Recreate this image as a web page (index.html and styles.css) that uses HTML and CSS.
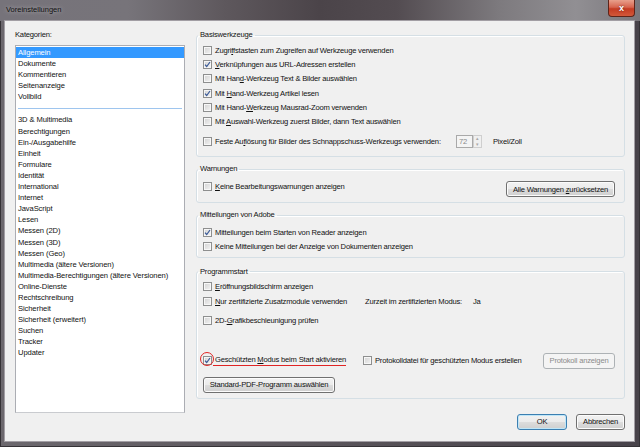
FILE: index.html
```html
<!DOCTYPE html>
<html lang="de">
<head>
    <meta charset="UTF-8">
    <title>Voreinstellungen</title>
    <link rel="stylesheet" href="styles.css">
</head>
<body>
    <div class="window">
        <div class="titlebar">
            <span class="title">Voreinstellungen</span>
            <span class="close">x</span>
        </div>

        <div class="client">
            <!-- Kategorien links -->
            <div class="side">
                <div class="side-label">Kategorien:</div>
                <ul class="cat-list">
                    <li class="selected">Allgemein</li>
                    <li>Dokumente</li>
                    <li>Kommentieren</li>
                    <li>Seitenanzeige</li>
                    <li>Vollbild</li>
                    <li class="sep"></li>
                    <li>3D &amp; Multimedia</li>
                    <li>Berechtigungen</li>
                    <li>Ein-/Ausgabehilfe</li>
                    <li>Einheit</li>
                    <li>Formulare</li>
                    <li>Identität</li>
                    <li>International</li>
                    <li>Internet</li>
                    <li>JavaScript</li>
                    <li>Lesen</li>
                    <li>Messen (2D)</li>
                    <li>Messen (3D)</li>
                    <li>Messen (Geo)</li>
                    <li>Multimedia (ältere Versionen)</li>
                    <li>Multimedia-Berechtigungen (ältere Versionen)</li>
                    <li>Online-Dienste</li>
                    <li>Rechtschreibung</li>
                    <li>Sicherheit</li>
                    <li>Sicherheit (erweitert)</li>
                    <li>Suchen</li>
                    <li>Tracker</li>
                    <li>Updater</li>
                </ul>
            </div>

            <!-- Einstellungen rechts -->
            <div class="main">
                <fieldset class="group basis">
                    <legend>Basiswerkzeuge</legend>
                    <div class="row"><span class="cb"></span><span>Zugri<u>f</u>fstasten zum Zugreifen auf Werkzeuge verwenden</span></div>
                    <div class="row"><span class="cb"><svg viewBox="0 0 9 9"><path d="M2 4.6 L3.7 6.5 L7 2"/></svg></span><span><u>V</u>erknüpfungen aus URL-Adressen erstellen</span></div>
                    <div class="row"><span class="cb"></span><span>Mit Han<u>d</u>-Werkzeug Text &amp; Bilder auswählen</span></div>
                    <div class="row"><span class="cb"><svg viewBox="0 0 9 9"><path d="M2 4.6 L3.7 6.5 L7 2"/></svg></span><span>Mit <u>H</u>and-Werkzeug Artikel lesen</span></div>
                    <div class="row"><span class="cb"></span><span>Mit Hand-<u>W</u>erkzeug Mausrad-Zoom verwenden</span></div>
                    <div class="row"><span class="cb"></span><span>Mit <u>A</u>uswahl-Werkzeug zuerst Bilder, dann Text auswählen</span></div>
                    <div class="row spin-row">
                        <span class="spin-label"><span class="cb"></span><span>Feste Au<u>f</u>lösung für Bilder des Schnappschuss-Werkzeugs verwenden:</span></span>
                        <span class="spin">
                            <span class="spin-field">72</span>
                            <span class="spin-btns"><span>&#9652;</span><span>&#9662;</span></span>
                        </span>
                        <span class="unit">Pixel/Zoll</span>
                    </div>
                </fieldset>

                <fieldset class="group warn">
                    <legend>Warnungen</legend>
                    <div class="row-split">
                        <div class="row"><span class="cb"></span><span><u>K</u>eine Bearbeitungswarnungen anzeigen</span></div>
                        <button class="btn btn-reset">Alle Warnungen <u>z</u>urücksetzen</button>
                    </div>
                </fieldset>

                <fieldset class="group news">
                    <legend>Mitteilungen von Adobe</legend>
                    <div class="row"><span class="cb"><svg viewBox="0 0 9 9"><path d="M2 4.6 L3.7 6.5 L7 2"/></svg></span><span>Mitteilungen beim Starten von Reader anzeigen</span></div>
                    <div class="row"><span class="cb"></span><span>Keine Mitteilungen bei der Anzeige von Dokumenten anzeigen</span></div>
                </fieldset>

                <fieldset class="group start">
                    <legend>Programmstart</legend>
                    <div class="row"><span class="cb"></span><span><u>E</u>röffnungsbildschirm anzeigen</span></div>
                    <div class="row">
                        <span class="cell-first"><span class="cb"></span><span><u>N</u>ur zertifizierte Zusatzmodule verwenden</span></span>
                        <span class="status">Zurzeit im zertifizierten Modus:</span>
                        <span>Ja</span>
                    </div>
                    <div class="row gap-small"><span class="cb"></span><span>2D-<u>G</u>rafikbeschleunigung prüfen</span></div>
                    <div class="row protect">
                        <span class="cell-protect"><span class="cb marked"><svg viewBox="0 0 9 9"><path d="M2 4.6 L3.7 6.5 L7 2"/></svg></span><span class="marked-text">Geschützten <u>M</u>odus beim Start aktivieren</span></span>
                        <span class="cb"></span><span>Protokolldatei für geschützten Modus erstellen</span>
                        <button class="btn btn-log" disabled>Protokoll anzeigen</button>
                    </div>
                    <div class="row-btn">
                        <button class="btn btn-default">Standard-PDF-Programm auswählen</button>
                    </div>
                </fieldset>

                <div class="dialog-buttons">
                    <button class="btn btn-ok">OK</button>
                    <button class="btn btn-cancel">Abbrechen</button>
                </div>
            </div>
        </div>
    </div>
</body>
</html>
```

FILE: styles.css
```css
body {
    margin: 0;
    font-family: "Liberation Sans", Arial, sans-serif;
    font-size: 7.6px;
    letter-spacing: -0.2px;
    color: #111;
}

.window {
    width: 640px;
    height: 447px;
    box-sizing: border-box;
    display: flex;
    flex-direction: column;
    padding: 0 6px 6px 5px;
    background: linear-gradient(to right, #6c686e, #5a555b 50%, #48434a);
    box-shadow: inset 0 0 0 1px #353236;
}

.titlebar {
    height: 21px;
    margin: 0 -6px 0 -5px;
    padding: 0 5px 0 6px;
    display: flex;
    justify-content: space-between;
    align-items: flex-start;
    background: linear-gradient(to right, #76737a 0%, #77747a 20%, #5e585d 35%, #4b4449 50%, #534c51 62%, #7d7a7e 78%, #918f93 90%, #7a777c 100%);
}

.title {
    line-height: 20px;
    font-size: 7.5px;
    letter-spacing: 0;
    color: #111;
    text-shadow: 0 0 4px rgba(255, 255, 255, 0.5);
}

.close {
    width: 27px;
    height: 17px;
    box-sizing: border-box;
    border: 1px solid #5e2419;
    border-top: none;
    border-radius: 0 0 4px 4px;
    background: linear-gradient(#e8a08c, #d7654f 45%, #c43b22 55%, #d2583a);
    color: #fff;
    font-weight: bold;
    font-size: 9px;
    letter-spacing: 0;
    display: flex;
    justify-content: center;
    align-items: center;
    text-shadow: 0 0 2px #5a1a10;
}

.client {
    flex: 1;
    display: flex;
    gap: 11px;
    padding: 9px 9px 10px 10px;
    background: #f0f0f0;
    box-shadow: 0 0 0 1px #a29ea4;
}

/* Kategorien */

.side {
    width: 170px;
    display: flex;
    flex-direction: column;
    padding-bottom: 18px;
}

.side-label {
    line-height: 10px;
    margin-bottom: 5px;
}

.cat-list {
    flex: 1;
    margin: 0;
    padding: 1px 0;
    list-style: none;
    background: #fff;
    border: 1px solid #abadb3;
    border-bottom-color: #c9cbcf;
}

.cat-list li {
    height: 11.1px;
    line-height: 11.1px;
    padding-left: 2px;
    white-space: nowrap;
    letter-spacing: -0.1px;
}

.cat-list .selected {
    background: #3399ff;
    color: #fff;
}

.cat-list .sep {
    height: 12px;
    display: flex;
    align-items: center;
    padding: 0 2px;
}

.cat-list .sep::before {
    content: "";
    flex: 1;
    height: 1px;
    background: #9ec5ee;
}

/* Gruppen */

.main {
    flex: 1;
    display: flex;
    flex-direction: column;
}

.group {
    margin: 0;
    padding: 3px 9px 7px 6px;
    border: 1px solid #d5dfe5;
    border-radius: 3px;
    box-shadow: inset 1px 1px 0 #fff;
}

.group legend {
    padding: 0 2px;
    margin-left: -5px;
    line-height: 10px;
}

.warn {
    margin-top: 7px;
    padding-top: 5px;
    padding-bottom: 5px;
}

.news {
    margin-top: 7px;
    padding-top: 5px;
    padding-bottom: 3px;
}

.start {
    margin-top: 9px;
    padding-top: 3px;
    padding-bottom: 5px;
}

.row {
    height: 14.3px;
    display: flex;
    align-items: center;
    white-space: nowrap;
}

.row-split {
    display: flex;
    justify-content: space-between;
    align-items: flex-start;
}

.row-split .btn {
    margin-top: 2px;
}

.cb {
    width: 9px;
    height: 9px;
    flex: none;
    box-sizing: border-box;
    margin-right: 3px;
    border: 1px solid #8e8f8f;
    background: linear-gradient(135deg, #d2d2d2, #f4f4f4);
    box-shadow: inset 0 0 0 1px #f7f7f7;
    display: inline-flex;
}

.cb svg {
    width: 9px;
    height: 9px;
    margin: -1px;
}

.cb path {
    fill: none;
    stroke: #3a5a98;
    stroke-width: 1.2;
}

.spin-row {
    margin-top: 6px;
}

.spin-label {
    width: 253px;
    display: flex;
    align-items: center;
}

.spin {
    display: flex;
}

.spin-field {
    width: 17px;
    height: 13px;
    box-sizing: border-box;
    border: 1px solid #a9a9a9;
    background: #f4f4f4;
    color: #8a8a8a;
    line-height: 11px;
    padding-left: 2px;
}

.spin-btns {
    width: 9px;
    height: 13px;
    box-sizing: border-box;
    border: 1px solid #cfcfcf;
    display: flex;
    flex-direction: column;
    color: #a8a8a8;
    font-size: 5px;
    line-height: 5.5px;
    text-align: center;
    letter-spacing: 0;
}

.unit {
    margin-left: 11px;
}

.cell-first {
    width: 162px;
    display: flex;
    align-items: center;
}

.status {
    width: 108px;
}

.gap-small {
    margin-top: 5px;
}

.protect {
    height: 16px;
    margin-top: 25px;
}

.cell-protect {
    width: 160px;
    display: flex;
    align-items: center;
}

.marked {
    position: relative;
}

/* rote Markierung um das Kontrollkästchen */
.marked::after {
    content: "";
    position: absolute;
    left: -4px;
    top: -5px;
    width: 12px;
    height: 12px;
    border: 1px solid #e02424;
    border-radius: 50%;
}

.marked-text {
    margin-left: -2px;
    padding: 0 0 1px 2px;
    border-bottom: 1px solid #e02424;
}

.row-btn {
    margin-top: 8px;
    display: flex;
}

/* Buttons */

.btn {
    height: 16px;
    box-sizing: border-box;
    padding: 0;
    border: 1px solid #707070;
    border-radius: 3px;
    background: linear-gradient(#f2f2f2 0%, #ebebeb 50%, #dddddd 50%, #cfcfcf 100%);
    font: inherit;
    letter-spacing: inherit;
    color: #111;
    box-shadow: inset 0 0 0 1px #fcfcfc;
}

.protect .btn {
    margin-left: auto;
}

.btn:disabled {
    border-color: #adb2b5;
    background: #f4f4f4;
    color: #8b8b8b;
    box-shadow: none;
}

.btn-reset {
    width: 109px;
}

.btn-log {
    width: 72px;
}

.btn-default {
    width: 132px;
}

.dialog-buttons {
    margin-top: 15px;
    display: flex;
    justify-content: flex-end;
    gap: 9px;
}

.btn-ok {
    width: 50px;
    border-color: #3c7fb1;
    box-shadow: inset 0 0 0 1px #bfe6f8;
}

.btn-cancel {
    width: 49px;
}
```
